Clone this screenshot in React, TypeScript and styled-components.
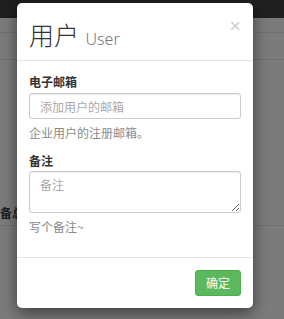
import styled, { createGlobalStyle } from 'styled-components';

const GlobalStyle = createGlobalStyle`
	html, body {
		margin: 0;
		padding: 0;
		background: #7b7b7b;
		font-family: "Noto Sans", "Noto Sans CJK SC", sans-serif;
	}
	* { box-sizing: border-box; }
`;

export default function App() {
	return (
		<>
			<GlobalStyle />
			<Page>
				<Navbar />
				<Row $height={15} />
				<Row $height={27} />
				<Section>
					<SectionTitle>备总</SectionTitle>
				</Section>
				<Row $height={93} $noLine />
			</Page>
			<Modal>
				<Header>
					<Title>
						用户 <small>User</small>
					</Title>
					<CloseBtn>×</CloseBtn>
				</Header>
				<Body>
					<Label>电子邮箱</Label>
					<Input placeholder="添加用户的邮箱" />
					<Help>企业用户的注册邮箱。</Help>
					<Label $gap>备注</Label>
					<TextArea placeholder="备注" />
					<Help>写个备注~</Help>
				</Body>
				<Footer>
					<Button>确定</Button>
				</Footer>
			</Modal>
		</>
	);
}

const Page = styled.div`
	width: 284px;
	height: 319px;
	overflow: hidden;
	background: #7b7b7b;
`;

const Navbar = styled.div`
	height: 18px;
	background: #1f1f1f;
`;

const Row = styled.div<{ $height: number; $noLine?: boolean }>`
	height: ${(p) => p.$height}px;
	border-bottom: ${(p) => (p.$noLine ? 'none' : '1px solid #6f6f6f')};
`;

const Section = styled.div`
	height: 166px;
	display: flex;
	align-items: flex-end;
	padding-bottom: 3px;
	border-bottom: 1px solid #6f6f6f;
`;

const SectionTitle = styled.span`
	margin-left: 0;
	font-family: "Noto Sans CJK SC", sans-serif;
	font-size: 12px;
	font-weight: 700;
	color: #1c1c1c;
	line-height: 18px;
`;

const Modal = styled.div`
	position: absolute;
	left: 17px;
	top: 3px;
	width: 236px;
	background: #fff;
	border-radius: 5px;
	box-shadow: 0 5px 15px rgba(0, 0, 0, 0.5);
	display: flex;
	flex-direction: column;
`;

const Header = styled.div`
	position: relative;
	height: 58px;
	padding: 16px 12px 0;
	border-bottom: 1px solid #e5e5e5;
`;

const Title = styled.h1`
	margin: 0;
	font-family: "Noto Sans CJK SC", sans-serif;
	font-size: 25px;
	font-weight: 300;
	line-height: 30px;
	color: #333;

	small {
		font-family: "Noto Sans", sans-serif;
		font-size: 16px;
		color: #777;
		margin-left: 1px;
	}
`;

const CloseBtn = styled.span`
	position: absolute;
	right: 12px;
	top: 11px;
	font-size: 20px;
	font-weight: 400;
	color: #cfcfcf;
	line-height: 24px;
`;

const Body = styled.div`
	padding: 12px 12px 21px;
	display: flex;
	flex-direction: column;
`;

const Label = styled.label<{ $gap?: boolean }>`
	font-family: "Noto Sans CJK SC", sans-serif;
	font-size: 12px;
	font-weight: 700;
	line-height: 18px;
	color: #333;
	margin-top: ${(p) => (p.$gap ? '10px' : '0')};
	margin-bottom: ${(p) => (p.$gap ? '1px' : '2px')};
`;

const Input = styled.input`
	height: 26px;
	width: 100%;
	border: 1px solid #ccc;
	border-radius: 3px;
	padding: 0 10px;
	font-family: "Noto Sans CJK SC", sans-serif;
	font-size: 12px;
	color: #555;
	outline: none;
	box-shadow: inset 0 1px 1px rgba(0, 0, 0, 0.075);

	&::placeholder {
		color: #aaa;
	}
`;

const TextArea = styled.textarea`
	height: 42px;
	width: 100%;
	border: 1px solid #ccc;
	border-radius: 3px;
	padding: 4px 10px;
	font-family: "Noto Sans CJK SC", sans-serif;
	font-size: 12px;
	line-height: 18px;
	color: #555;
	outline: none;
	resize: vertical;
	box-shadow: inset 0 1px 1px rgba(0, 0, 0, 0.075);

	&::placeholder {
		color: #aaa;
	}
`;

const Help = styled.p`
	margin: 5px 0 0;
	font-family: "Noto Sans CJK SC", sans-serif;
	font-size: 12px;
	line-height: 18px;
	color: #8a8a8a;
`;

const Footer = styled.div`
	padding: 12px 12px 12px;
	border-top: 1px solid #e5e5e5;
	display: flex;
	justify-content: flex-end;
`;

const Button = styled.button`
	height: 26px;
	padding: 0 10px;
	border: 1px solid #4cae4c;
	border-radius: 3px;
	background: #5cb85c;
	color: #fff;
	font-family: "Noto Sans CJK SC", sans-serif;
	font-size: 12px;
	line-height: 24px;
`;
